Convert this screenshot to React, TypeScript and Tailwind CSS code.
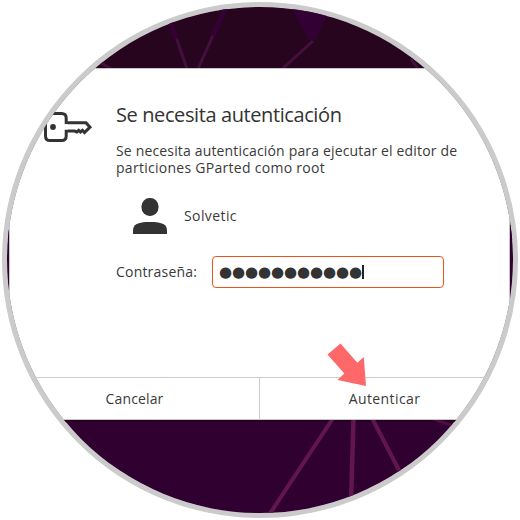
import { useState } from 'react';

const DOTS = '●●●●●●●●●●●';

// fondo de escritorio
function Wallpaper() {
  return (
    <svg className="absolute inset-0 h-full w-full" viewBox="7 7 506 506" fill="none">
      <rect x="0" y="0" width="520" height="240" fill="#27051f" />
      <rect x="0" y="225" width="520" height="295" fill="#300030" />
      <rect x="0" y="420" width="520" height="2" fill="#27021f" />
      <path d="M291 7 L328 7 L326 18 L316 39 L309 40 Z" fill="#330033" />
      <path d="M171 22 L187 69 M226 6 L198 69" stroke="#43103d" strokeWidth="3" />
      <path d="M170 20 L176 39 M226.500 6 L213 36" stroke="#350033" strokeWidth="5" />
      <path d="M281 70 L313 41 M100 62 L111 69 M411 59 L418 69" stroke="#45103c" strokeWidth="3" />
      <path d="M332.500 419 L269 515" stroke="#611650" strokeWidth="4" />
      <path d="M353.500 419 L351 502" stroke="#611650" strokeWidth="4.500" />
      <path d="M372.500 419 L401 474" stroke="#611650" strokeWidth="4" />
      <path d="M434 419 L456 427" stroke="#4a0e40" strokeWidth="3" />
    </svg>
  );
}

function KeyIcon() {
  return (
    <svg className="h-8 w-[52px]" viewBox="42 111 52 32" fill="none">
      <path
        d="M66.200 122.700 H86 L90 127.200 L84.500 132.500 L82.500 130.300 L80.500 132 L78.700 130.300 L76.800 132 L74.500 131 H66.200 V136 Q66.200 140.600 61.500 140.600 H50 Q45.500 140.600 45.500 136 V118 Q45.500 113.500 50 113.500 H61.500 Q66.200 113.500 66.200 118 Z"
        stroke="#333"
        strokeWidth="3"
      />
      {/* hueco entre la cabeza y el vástago */}
      <path d="M66.200 124.200 V129.500" stroke="#fff" strokeWidth="3.400" />
      <circle cx="53" cy="127" r="2.900" fill="#333" />
    </svg>
  );
}

function UserIcon() {
  return (
    <svg className="h-9 w-[34px]" viewBox="133 198 34 36" fill="#333">
      <rect x="141.500" y="198" width="17" height="18" rx="8.200" />
      <path d="M133 234 V231 C133 224.500 137 222 150 222 C163 222 167 224.500 167 231 V234 Z" />
    </svg>
  );
}

export default function App() {
  const [password] = useState(DOTS);

  return (
    <div className="h-[520px] w-[520px] overflow-hidden bg-white p-[2px] font-['Open_Sans','Noto_Sans',sans-serif] text-[14px] text-[#3a3a3a]">
      <div className="relative h-[516px] w-[516px] overflow-hidden rounded-full border-[5px] border-[#cbcbcb] pt-[61px] pl-[2px]">
        <Wallpaper />

        <div className="relative flex h-[352px] w-[501px] flex-col border border-[#c8c4c7] bg-white">
          <div className="flex h-[308px] pl-8">
            <div className="w-[74px] shrink-0 pt-[42px]">
              <KeyIcon />
            </div>

            <div className="flex flex-col pt-8 whitespace-nowrap">
              <h1 className="text-[20px] leading-7 tracking-[-0.4px] text-[#333]">Se necesita autenticación</h1>
              <div className="mt-[13px] leading-[17px]">
                <p className="tracking-[0.16px]">Se necesita autenticación para ejecutar el editor de</p>
                <p className="tracking-[0.28px]">particiones GParted como root</p>
              </div>

              <div className="mt-[22px] flex items-center gap-[17px] pl-[17px]">
                <UserIcon />
                <span className="pb-[2px] tracking-[0.4px]">Solvetic</span>
              </div>

              <div className="mt-[22px] flex items-center">
                <label className="w-24 pb-[2px] tracking-[0.2px]">Contraseña:</label>
                <div className="flex h-8 w-[232px] items-center rounded-[4px] border border-[#e95420] pl-[6px]">
                  <span className="font-['DejaVu_Sans',sans-serif] text-[15px] leading-5 tracking-[-0.1px] text-[#333]">{password}</span>
                  <span className="h-[14px] w-[2px] bg-[#222]"></span>
                </div>
              </div>
            </div>
          </div>

          <div className="flex flex-1 border-t border-[#cbcbcb]">
            <button className="w-[250px] border-r border-[#cbcbcb] tracking-[0.15px]">Cancelar</button>
            <button className="w-[249px] tracking-[0.4px]">Autenticar</button>
          </div>

          <svg className="absolute top-[274px] left-[317px] h-[44px] w-[40px]" viewBox="327 343 40 44">
            <path d="M340.500 343.500 L357.300 362.700 L363.800 357 L366 386 L337.500 380 L344.300 373.600 L327.500 354.500 Z" fill="#ff6868" />
          </svg>
        </div>
      </div>
    </div>
  );
}
